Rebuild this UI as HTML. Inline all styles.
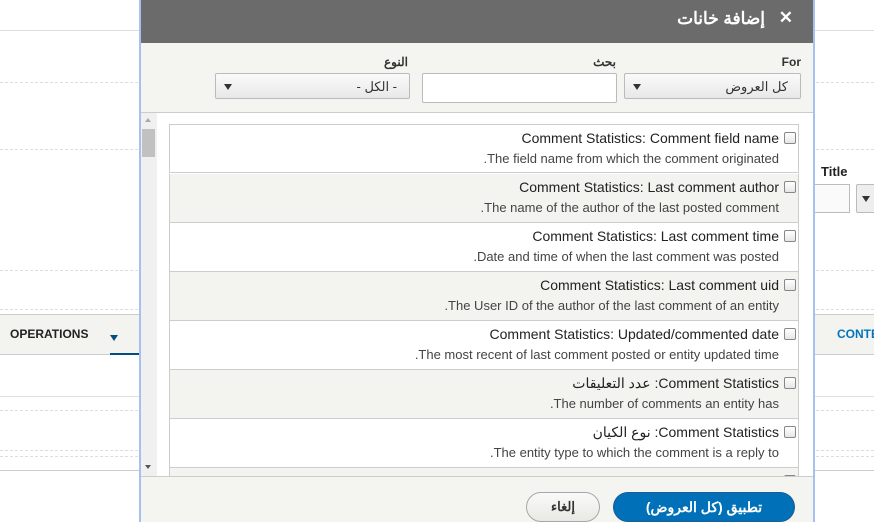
<!DOCTYPE html>
<html><head><meta charset="utf-8"><style>
*{box-sizing:border-box;margin:0;padding:0}
body{width:874px;height:522px;overflow:hidden;background:#fff;font-family:"Liberation Sans","Noto Sans CJK SC",sans-serif;position:relative;color:#333}
.abs{position:absolute}
.dash{position:absolute;left:0;width:874px;border-top:1px dashed #ddd}
.dlg{position:absolute;left:139px;top:0;width:676px;height:522px;border-left:2px solid #a6c1f0;border-right:2px solid #a6c1f0;background:#f4f4f0}
.hdr{position:absolute;left:0;top:0;width:100%;height:43px;background:#6b6b6b;color:#fff;font-weight:bold;font-size:17px}
.lbl{position:absolute;font-size:12px;font-weight:bold;color:#333}
.sel{position:absolute;height:26px;border:1px solid #bbb;border-radius:2px;background:linear-gradient(#fafafa,#e8e8e8);font-size:13px;padding:5px 12px;text-align:right;direction:rtl}
.tri{position:absolute;width:0;height:0;border-left:4px solid transparent;border-right:4px solid transparent;border-top:6px solid #333}
.list{position:absolute;left:0;top:112px;width:672px;height:365px;background:#fff;border-top:1px solid #ccc;border-bottom:1px solid #ccc;overflow:hidden}
.sb{position:absolute;left:0;top:0;width:16px;height:100%;background:#f0f0f0}
.row{position:absolute;left:28px;width:630px;height:49px;border:1px solid #ccc;border-top:none;text-align:right}
.row .t{position:absolute;right:19px;top:5px;font-size:14px;color:#222;white-space:nowrap}
.row .d{position:absolute;right:19px;top:26px;font-size:13px;color:#444;white-space:nowrap}
.row .c{position:absolute;right:2px;top:7px;width:12px;height:12px;border:1px solid #888;border-radius:2px;background:linear-gradient(#fff,#e6e6e6)}
.alt{background:#f3f3ef}
</style></head><body>
<div class="dash" style="top:82px"></div>
<div class="dash" style="top:149px"></div>
<div class="dash" style="top:270px"></div>
<div class="dash" style="top:309px"></div>
<div class="dash" style="top:410px"></div>
<div class="dash" style="top:450px"></div>
<div class="dash" style="top:456px"></div>
<div class="abs" style="left:0;top:30px;width:874px;border-top:1px solid #ddd"></div>
<div class="abs" style="left:0;top:314px;width:874px;height:41px;background:#f3f3ef;border-top:1px solid #ccc;border-bottom:1px solid #ccc"></div>
<div class="abs" style="left:10px;top:327px;font-size:12px;font-weight:bold;color:#222">OPERATIONS</div>
<div class="tri" style="left:110px;top:335px;border-top-color:#004f80"></div>
<div class="abs" style="left:110px;top:353px;width:30px;height:2px;background:#004f80"></div>
<div class="abs" style="left:0;top:396px;width:874px;border-top:1px solid #e2e2dc"></div>
<div class="abs" style="left:0;top:470px;width:874px;border-top:1px solid #ccc"></div>
<div class="abs" style="left:821px;top:164px;font-size:13px;font-weight:bold;color:#222">Title</div>
<div class="abs" style="left:810px;top:184px;width:40px;height:29px;border:1px solid #bbb;background:#fafafa"></div>
<div class="abs" style="left:856px;top:184px;width:30px;height:29px;border:1px solid #bbb;border-radius:2px;background:#eee"></div>
<div class="tri" style="left:862px;top:196px"></div>
<div class="abs" style="left:837px;top:327px;font-size:12px;font-weight:bold;color:#0074bd">CONTENT</div>

<div class="dlg">
 <div class="hdr"><span class="abs" style="right:20px;top:8px;font-size:17px">✕</span><span class="abs" style="right:48px;top:9px;direction:rtl">إضافة خانات</span></div>
 <div class="lbl" style="right:12px;top:55px">For</div>
 <div class="lbl" style="right:197px;top:55px">بحث</div>
 <div class="lbl" style="right:405px;top:55px">النوع</div>
 <div class="sel" style="left:483px;top:73px;width:177px">كل العروض</div><div class="tri" style="left:492px;top:84px"></div>
 <div class="abs" style="left:281px;top:73px;width:195px;height:30px;border:1px solid #bbb;border-radius:2px;background:#fff"></div>
 <div class="sel" style="left:74px;top:73px;width:195px">- الكل -</div><div class="tri" style="left:83px;top:84px"></div>
 <div class="list">
  <div class="sb"><div class="abs" style="left:1px;top:16px;width:13px;height:28px;background:#c1c1c1"></div>
   <div class="abs" style="left:4px;top:5px;border-left:3px solid transparent;border-right:3px solid transparent;border-bottom:4px solid #aaa"></div>
   <div class="abs" style="left:4px;top:352px;border-left:3px solid transparent;border-right:3px solid transparent;border-top:4px solid #555"></div></div>
  <div class="row" style="top:11px;border-top:1px solid #ccc"><span class="c"></span><span class="t">Comment Statistics: Comment field name</span><span class="d">.The field name from which the comment originated</span></div>
  <div class="row alt" style="top:61px"><span class="c"></span><span class="t">Comment Statistics: Last comment author</span><span class="d">.The name of the author of the last posted comment</span></div>
  <div class="row" style="top:110px"><span class="c"></span><span class="t">Comment Statistics: Last comment time</span><span class="d">.Date and time of when the last comment was posted</span></div>
  <div class="row alt" style="top:159px"><span class="c"></span><span class="t">Comment Statistics: Last comment uid</span><span class="d">.The User ID of the author of the last comment of an entity</span></div>
  <div class="row" style="top:208px"><span class="c"></span><span class="t">Comment Statistics: Updated/commented date</span><span class="d">.The most recent of last comment posted or entity updated time</span></div>
  <div class="row alt" style="top:257px"><span class="c"></span><span class="t">عدد التعليقات :Comment Statistics</span><span class="d">.The number of comments an entity has</span></div>
  <div class="row" style="top:306px"><span class="c"></span><span class="t">نوع الكيان :Comment Statistics</span><span class="d">.The entity type to which the comment is a reply to</span></div>
  <div class="row alt" style="top:355px"><span class="c"></span></div>
 </div>
 <div class="abs" style="left:472px;top:492px;width:182px;height:30px;border-radius:15px;background:#0071b8;border:1px solid #1e5c90;color:#fff;font-weight:bold;font-size:14px;text-align:center;line-height:28px;direction:rtl">تطبيق (كل العروض)</div>
 <div class="abs" style="left:385px;top:492px;width:74px;height:30px;border-radius:15px;background:linear-gradient(#fafafa,#e8e8e4);border:1px solid #a6a6a6;color:#333;font-weight:bold;font-size:13px;text-align:center;line-height:28px">إلغاء</div>
</div>
</body></html>
